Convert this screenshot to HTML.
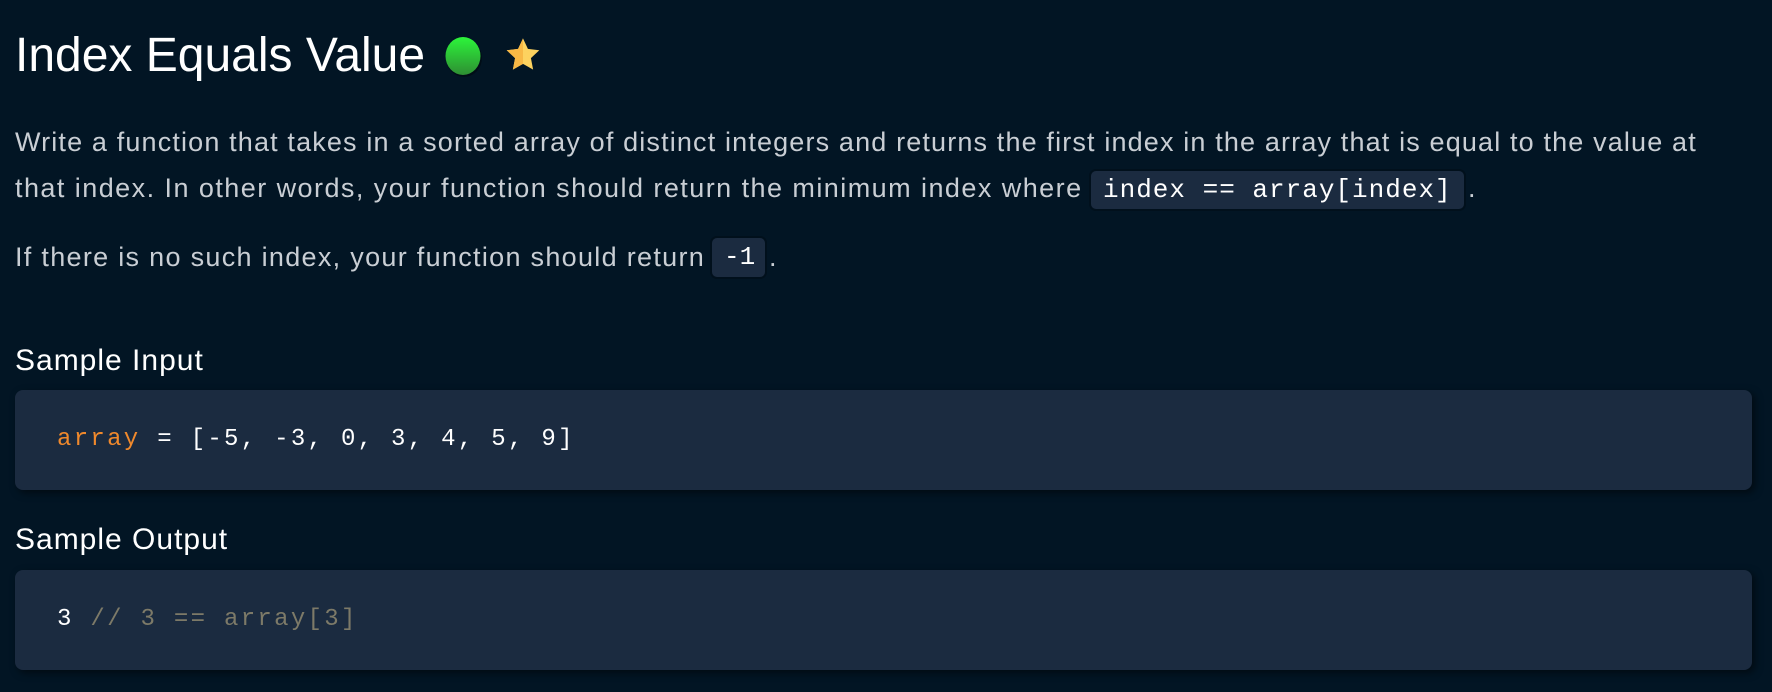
<!DOCTYPE html>
<html><head><meta charset="utf-8"><style>
html,body{margin:0;padding:0;background:#021524;width:1772px;height:692px;overflow:hidden}
body{font-family:"Liberation Sans","DejaVu Sans",sans-serif;color:#c9ced4;position:relative}
.a{position:absolute;white-space:nowrap}
h1{position:absolute;margin:0;left:15px;top:26px;font-size:48px;font-weight:normal;color:#fff;line-height:60px;letter-spacing:0px}
.p{font-size:27px;line-height:30px;left:15px;letter-spacing:1.15px}
.c{background:#1b2b40;border:2px solid #01101c;border-radius:7px;font-family:"Liberation Mono",monospace;color:#fff;position:absolute;box-sizing:border-box;white-space:nowrap}
h2{position:absolute;margin:0;left:15px;font-size:30px;font-weight:normal;color:#fff;line-height:34px;letter-spacing:1px}
.box{position:absolute;left:15px;width:1737px;height:100px;background:#1b2b40;border-radius:8px;box-shadow:3px 3px 8px rgba(0,0,0,.5);font-family:"Liberation Mono",monospace;font-size:24px;letter-spacing:2.3px;color:#fff;line-height:100px;padding-left:42px;box-sizing:border-box;white-space:pre}
</style></head><body>
<h1>Index Equals Value</h1>
<svg class="a" style="left:444px;top:36px" width="40" height="42" viewBox="0 0 40 42"><defs><linearGradient id="g" x1="0" y1="0" x2="0" y2="1"><stop offset="0" stop-color="#2cf53a"/><stop offset="1" stop-color="#2e8e33"/></linearGradient></defs><ellipse cx="20" cy="22" rx="18" ry="19" fill="#000" opacity=".35"/><ellipse cx="19" cy="20" rx="17.5" ry="19" fill="url(#g)"/></svg>
<svg class="a" style="left:504px;top:36px" width="38" height="38" viewBox="0 0 24 24"><path d="M12 1.5l3.1 6.6 7.2.9-5.3 5 1.4 7.2L12 17.6l-6.4 3.6 1.4-7.2-5.3-5 7.2-.9z" fill="#fdd25f"/><path d="M12 1.5L8.9 8.1l-7.2.9 5.3 5-1.4 7.2L12 17.6z" fill="#f8b845"/></svg>
<div class="a p" style="top:127px">Write a function that takes in a sorted array of distinct integers and returns the first index in the array that is equal to the value at</div>
<div class="a p" style="top:173px;letter-spacing:1.45px">that index. In other words, your function should return the minimum index where</div>
<div class="c" style="left:1089px;top:169px;width:377px;height:42px;font-size:26px;letter-spacing:1px;line-height:38px;padding-left:12px">index == array[index]</div>
<div class="a p" style="left:1468px;top:173px">.</div>
<div class="a p" style="top:242px;letter-spacing:1.3px">If there is no such index, your function should return</div>
<div class="c" style="left:710px;top:236px;width:57px;height:43px;font-size:26px;line-height:39px;padding-left:12px">-1</div>
<div class="a p" style="left:769px;top:242px">.</div>
<h2 style="top:344px">Sample Input</h2>
<div class="box" style="top:390px"><span style="color:#f0892c">array</span> = [-5, -3, 0, 3, 4, 5, 9]</div>
<h2 style="top:523px">Sample Output</h2>
<div class="box" style="top:570px">3 <span style="color:#7d7a68">// 3 == array[3]</span></div>
</body></html>
